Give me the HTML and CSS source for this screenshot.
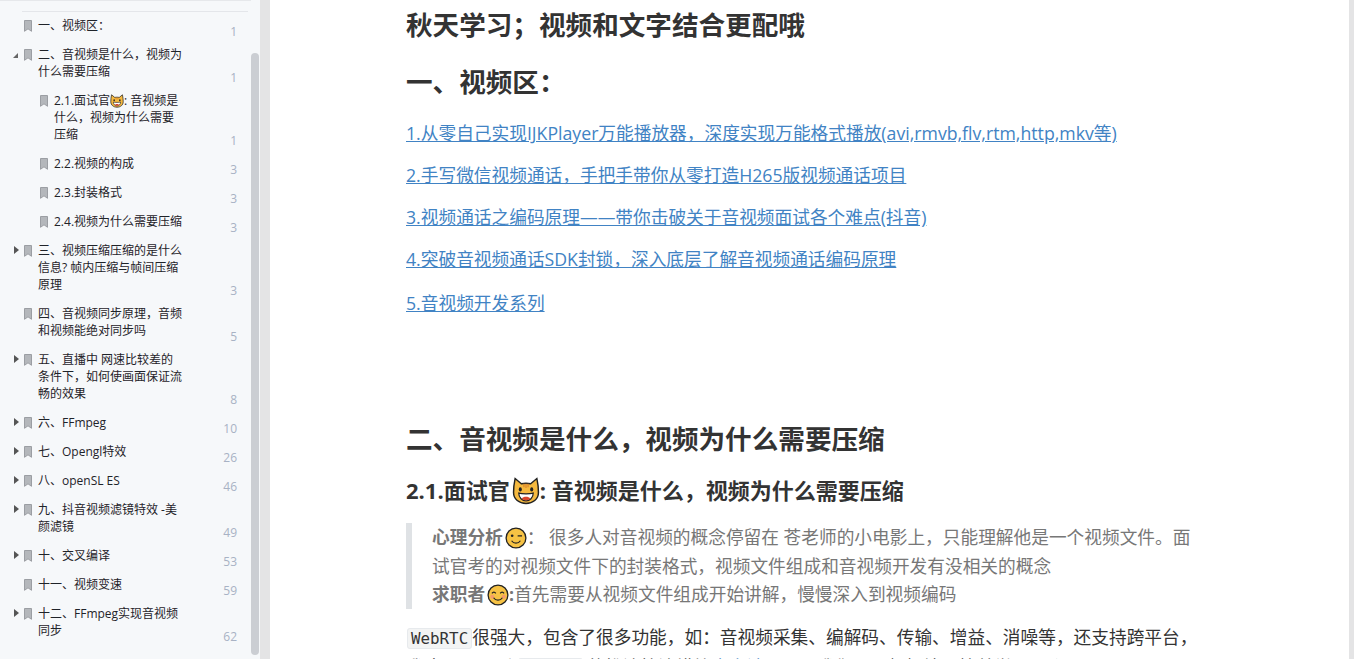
FILE: index.html
```html
<!DOCTYPE html>
<html lang="en">
<head>
    <meta charset="UTF-8">
    <title>秋天学习</title>
    <link rel="stylesheet" href="styles.css">
</head>
<body>
    <svg class="defs" width="0" height="0">
        <symbol id="mark" viewBox="0 0 8 12"><path d="M.5 .5H7.500V11.300L4 8.800L.5 11.300Z"/></symbol>
        <symbol id="wink" viewBox="0 0 20 20">
            <circle cx="10" cy="10" r="9" fill="#f6c244" stroke="#222" stroke-width="1.2"/>
            <circle cx="6.5" cy="8" r="1.2" fill="#222"/>
            <path d="M11.5 8h4M6 12.5c2 3 6 3 8 0" fill="none" stroke="#222" stroke-width="1.1"/>
        </symbol>
        <symbol id="smile" viewBox="0 0 20 20">
            <circle cx="10" cy="10" r="9" fill="#f6c244" stroke="#222" stroke-width="1.2"/>
            <circle cx="4.8" cy="11.5" r="1.8" fill="#f59b6c"/>
            <circle cx="15.2" cy="11.5" r="1.8" fill="#f59b6c"/>
            <path d="M4.5 8.5c1-1.5 2.500-1.500 3.500 0M12 8.500c1-1.500 2.500-1.500 3.500 0M6 12.500c2 3 6 3 8 0" fill="none" stroke="#222" stroke-width="1.1"/>
        </symbol>
        <symbol id="cat" viewBox="0 0 27 27">
            <path d="M3 1.500L9 6.500C11.500 6 15.500 6 18 6.500L24 1.500C25 6 25.500 11 25.500 15C25.500 21.500 20 25.500 13.500 25.500S1.500 21.500 1.500 15C1.500 11 2 6 3 1.500Z" fill="#f5b93f" stroke="#222" stroke-width="1.400"/>
            <path d="M11.500 6.500V10M13.500 6.500V10.500M15.500 6.500V10" stroke="#d9822b" stroke-width="1.100"/>
            <ellipse cx="8" cy="12" rx="1.500" ry="2" fill="#222"/>
            <ellipse cx="19" cy="12" rx="1.500" ry="2" fill="#222"/>
            <path d="M6.500 15.500C10 16.500 17 16.500 20.500 15.500C20.500 20 17 23 13.500 23S6.500 20 6.500 15.500Z" fill="#fff" stroke="#222" stroke-width="1.200"/>
            <path d="M9.500 21C10.500 18.500 16.500 18.500 17.500 21C15.500 23 11.500 23 9.500 21Z" fill="#d8452e"/>
        </symbol>
    </svg>

    <div class="page">
        <aside class="sidebar">
            <div class="sidebar-scroll">
                <div class="sidebar-top"></div>
                <ul class="toc">
                    <li class="row"><span class="arrow"></span><svg class="mark"><use href="#mark"/></svg><span class="label">一、视频区：</span><span class="num">1</span></li>
                    <li class="row"><span class="arrow open"></span><svg class="mark"><use href="#mark"/></svg><span class="label">二、音视频是什么，视频为什么需要压缩</span><span class="num">1</span></li>
                    <li class="row sub"><svg class="mark"><use href="#mark"/></svg><span class="label">2.1.面试官<svg class="emoji"><use href="#cat"/></svg>: 音视频是什么，视频为什么需要压缩</span><span class="num">1</span></li>
                    <li class="row sub"><svg class="mark"><use href="#mark"/></svg><span class="label">2.2.视频的构成</span><span class="num">3</span></li>
                    <li class="row sub"><svg class="mark"><use href="#mark"/></svg><span class="label">2.3.封装格式</span><span class="num">3</span></li>
                    <li class="row sub"><svg class="mark"><use href="#mark"/></svg><span class="label">2.4.视频为什么需要压缩</span><span class="num">3</span></li>
                    <li class="row"><span class="arrow closed"></span><svg class="mark"><use href="#mark"/></svg><span class="label">三、视频压缩压缩的是什么信息? 帧内压缩与帧间压缩原理</span><span class="num">3</span></li>
                    <li class="row"><span class="arrow"></span><svg class="mark"><use href="#mark"/></svg><span class="label">四、音视频同步原理，音频和视频能绝对同步吗</span><span class="num">5</span></li>
                    <li class="row"><span class="arrow closed"></span><svg class="mark"><use href="#mark"/></svg><span class="label">五、直播中 网速比较差的条件下，如何使画面保证流畅的效果</span><span class="num">8</span></li>
                    <li class="row"><span class="arrow closed"></span><svg class="mark"><use href="#mark"/></svg><span class="label">六、FFmpeg</span><span class="num">10</span></li>
                    <li class="row"><span class="arrow closed"></span><svg class="mark"><use href="#mark"/></svg><span class="label">七、Opengl特效</span><span class="num">26</span></li>
                    <li class="row"><span class="arrow closed"></span><svg class="mark"><use href="#mark"/></svg><span class="label">八、openSL ES</span><span class="num">46</span></li>
                    <li class="row"><span class="arrow closed"></span><svg class="mark"><use href="#mark"/></svg><span class="label">九、抖音视频滤镜特效 -美颜滤镜</span><span class="num">49</span></li>
                    <li class="row"><span class="arrow closed"></span><svg class="mark"><use href="#mark"/></svg><span class="label">十、交叉编译</span><span class="num">53</span></li>
                    <li class="row"><span class="arrow"></span><svg class="mark"><use href="#mark"/></svg><span class="label">十一、视频变速</span><span class="num">59</span></li>
                    <li class="row"><span class="arrow closed"></span><svg class="mark"><use href="#mark"/></svg><span class="label">十二、FFmpeg实现音视频同步</span><span class="num">62</span></li>
                </ul>
            </div>
            <div class="scrollbar"><div class="thumb"></div></div>
        </aside>

        <main class="sheet">
            <article class="doc">
                <h2>秋天学习；视频和文字结合更配哦</h2>
                <h2 class="second">一、视频区：</h2>
                <p class="link"><a href="#">1.从零自己实现IJKPlayer万能播放器，深度实现万能格式播放(avi,rmvb,flv,rtm,http,mkv等)</a></p>
                <p class="link"><a href="#">2.手写微信视频通话，手把手带你从零打造H265版视频通话项目</a></p>
                <p class="link"><a href="#">3.视频通话之编码原理——带你击破关于音视频面试各个难点(抖音)</a></p>
                <p class="link"><a href="#">4.突破音视频通话SDK封锁，深入底层了解音视频通话编码原理</a></p>
                <p class="link last"><a href="#">5.音视频开发系列</a></p>
                <h1>二、音视频是什么，视频为什么需要压缩</h1>
                <h3>2.1.面试官<svg class="emoji-big"><use href="#cat"/></svg>: 音视频是什么，视频为什么需要压缩</h3>
                <blockquote>
                    <strong>心理分析</strong><svg class="emoji-mid"><use href="#wink"/></svg>： 很多人对音视频的概念停留在 苍老师的小电影上，只能理解他是一个视频文件。面试官考的对视频文件下的封装格式，视频文件组成和音视频开发有没相关的概念<br>
                    <strong>求职者</strong><svg class="emoji-mid"><use href="#smile"/></svg><strong>:</strong>首先需要从视频文件组成开始讲解，慢慢深入到视频编码
                </blockquote>
                <p class="body"><code>WebRTC</code>很强大，包含了很多功能，如：音视频采集、编解码、传输、增益、消噪等，还支持跨平台，<br>我这里只用到 <code>WebRTC</code> 的推流拉流模块<a href="#">本文涉及更</a>，我们可以根据情况接着学习一个</p>
            </article>
        </main>
    </div>
</body>
</html>
```

FILE: styles.css
```css
html, body {
    margin: 0;
    height: 100%;
    overflow: hidden;
}
body {
    font-family: "Open Sans", "Noto Sans CJK SC", sans-serif;
    background-color: #e4e4e5;
    color: #333;
}
.defs {
    position: absolute;
}
.page {
    display: flex;
    height: 659px;
    overflow: hidden;
}
.sidebar {
    width: 260px;
    display: flex;
    flex-shrink: 0;
    background-color: #f6f8fa;
}
.sidebar-scroll {
    width: 251px;
    overflow: hidden;
    border-top: 1px solid #e6e8eb;
    box-sizing: border-box;
}
.sidebar-top {
    height: 10px;
    margin: 0 3px 0 22px;
    border-bottom: 1px solid #e4e6ea;
}
.toc {
    list-style: none;
    margin: 0;
    padding: 0;
}
.row {
    display: flex;
    align-items: flex-start;
    padding: 5px 0 0 12px;
    margin-bottom: 7px;
    font-size: 12px;
    line-height: 17px;
    color: #1f2329;
}
.row.sub {
    padding-left: 40px;
}
.arrow {
    width: 0;
    height: 0;
    flex-shrink: 0;
    margin-right: 12px;
    border: 0 solid transparent;
}
.arrow.closed {
    margin: 4px 5px 0 2px;
    border-width: 4px 0 4px 5px;
    border-left-color: #555;
}
.arrow.open {
    margin: 7px 6px 0 1px;
    border-width: 0 0 5px 5px;
    border-bottom-color: #666;
}
.mark {
    width: 8px;
    height: 12px;
    flex-shrink: 0;
    margin-top: 3px;
    fill: #b4b7bb;
    stroke: #9b9ea3;
}
.label {
    width: 146px;
    flex-shrink: 0;
    margin-left: 6px;
}
.row.sub .label {
    width: 130px;
    margin-left: 6px;
}
.num {
    flex: 1;
    align-self: flex-end;
    padding-right: 14px;
    text-align: right;
    color: #a8b2c4;
    transform: translateY(6px);
}
.emoji {
    width: 14px;
    height: 14px;
    vertical-align: -3px;
}
.scrollbar {
    width: 9px;
    padding-top: 53px;
}
.thumb {
    width: 8px;
    height: 602px;
    border-radius: 4px;
    background-color: #cbced3;
}
.sheet {
    width: 1079px;
    margin-left: 10px;
    background-color: #fff;
    flex-shrink: 0;
}
.doc {
    width: 786px;
    padding: 0 0 0 136px;
}
h2, h1, h3 {
    margin: 0;
    color: #333;
    font-weight: 700;
}
h2 {
    padding-top: 7px;
    font-size: 26.600px;
    line-height: 36px;
}
h2.second {
    padding-top: 21px;
}
.link {
    margin: 0;
    padding-top: 14px;
    font-size: 17.700px;
    line-height: 28px;
}
.link:nth-of-type(1) {
    padding-top: 19px;
}
.link.last {
    padding-top: 16px;
}
.link a, .body a {
    color: #4183c4;
}
h1 {
    margin-top: 102px;
    font-size: 26.600px;
    line-height: 40px;
}
h3 {
    margin-top: 15px;
    font-size: 22px;
    line-height: 32px;
}
.emoji-big {
    width: 28px;
    height: 28px;
    margin-left: 2px;
    vertical-align: -6px;
}
blockquote {
    margin: 17px 0 0;
    padding: 0 0 0 20px;
    border-left: 6px solid #dfe2e5;
    color: #777;
    font-size: 17.700px;
    line-height: 28.600px;
}
.emoji-mid {
    width: 22px;
    height: 22px;
    margin-left: 2px;
    vertical-align: -5px;
}
.body {
    margin: 14px 0 0;
    font-size: 17.700px;
    line-height: 28px;
    white-space: nowrap;
}
code {
    padding: 0 3px;
    margin-left: 1px;
    font-family: "DejaVu Sans Mono", monospace;
    font-size: 15.840px;
    background-color: #f3f4f4;
    border: 1px solid #e7eaed;
    border-radius: 3px;
}
```
